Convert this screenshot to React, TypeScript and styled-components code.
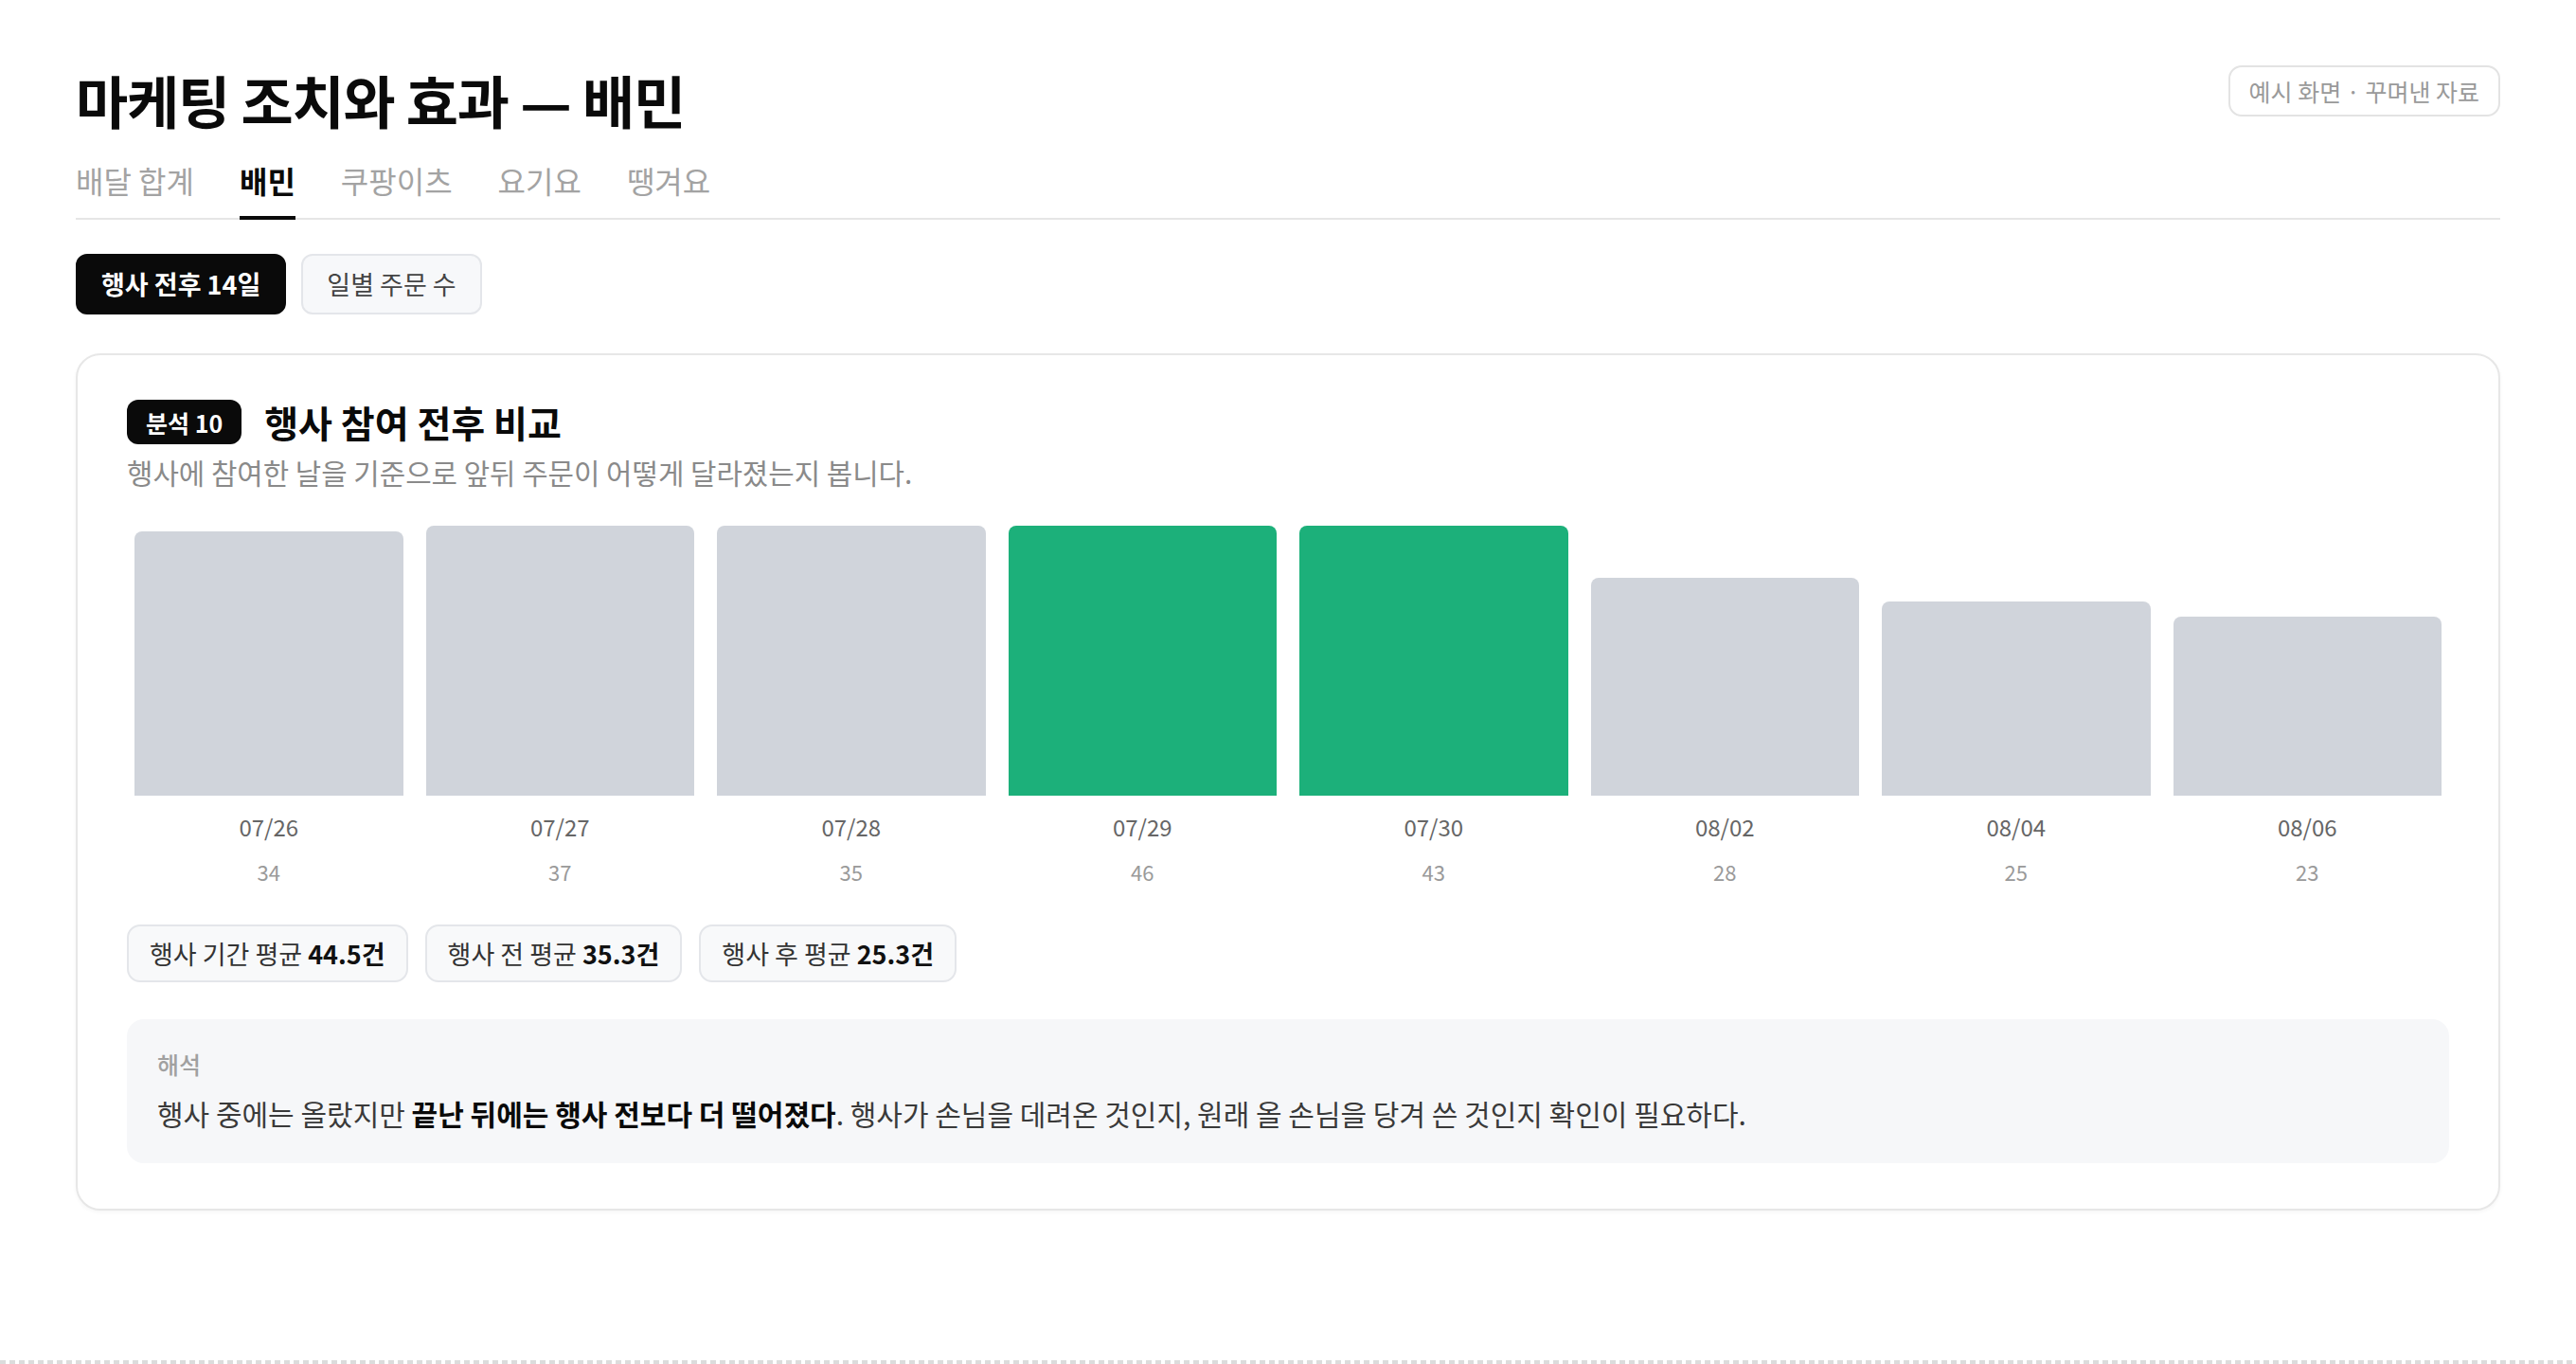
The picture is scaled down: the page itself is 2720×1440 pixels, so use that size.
import React from "react";
import styled, { createGlobalStyle } from "styled-components";

const GlobalStyle = createGlobalStyle`
  html, body {
    margin: 0;
    padding: 0;
    background: #ffffff;
  }
  body {
    font-family: "Noto Sans CJK KR", "Noto Sans", sans-serif;
    color: #111111;
    -webkit-font-smoothing: antialiased;
  }
  * { box-sizing: border-box; }
`;

const Page = styled.div`
  min-height: 100vh;
  display: flex;
  flex-direction: column;
`;

const Main = styled.main`
  padding: 69px 80px 0;
  display: flex;
  flex-direction: column;
`;

const Header = styled.header`
  display: flex;
  justify-content: space-between;
  align-items: flex-start;
`;

const Title = styled.h1`
  margin: 0;
  font-size: 60px;
  line-height: 72px;
  font-weight: 700;
  letter-spacing: -0.02em;
  color: #0a0a0a;
`;

const SampleBadge = styled.div`
  margin-top: 0;
  padding: 7px 20px;
  border: 2px solid #e3e3e3;
  border-radius: 14px;
  font-size: 25px;
  line-height: 36px;
  color: #9a9a9a;
  background: #ffffff;
`;

const TabBar = styled.nav`
  margin-top: 28px;
  display: flex;
  gap: 48px;
  border-bottom: 2px solid #e6e6e6;
`;

const Tab = styled.div<{ $active?: boolean }>`
  padding-bottom: 16px;
  margin-bottom: -2px;
  border-bottom: 4px solid ${(p) => (p.$active ? "#0a0a0a" : "transparent")};
  font-size: 32px;
  line-height: 43px;
  font-weight: ${(p) => (p.$active ? 700 : 400)};
  color: ${(p) => (p.$active ? "#0a0a0a" : "#a3a3a3")};
`;

const Segments = styled.div`
  margin-top: 36px;
  display: flex;
  gap: 16px;
`;

const Segment = styled.div<{ $active?: boolean }>`
  padding: 10px 25px;
  border: 2px solid ${(p) => (p.$active ? "#0a0a0a" : "#e4e6ea")};
  border-radius: 12px;
  background: ${(p) => (p.$active ? "#0a0a0a" : "#f7f8fa")};
  color: ${(p) => (p.$active ? "#ffffff" : "#444444")};
  font-size: 27px;
  line-height: 40px;
  font-weight: ${(p) => (p.$active ? 700 : 400)};
`;

const Card = styled.section`
  margin-top: 41px;
  padding: 47px 52px 48px;
  border: 2px solid #e7e7e7;
  border-radius: 26px;
  background: #ffffff;
  box-shadow: 0 2px 4px rgba(0, 0, 0, 0.04);
`;

const CardHead = styled.div`
  display: flex;
  align-items: center;
  gap: 24px;
`;

const AnalysisBadge = styled.span`
  display: inline-flex;
  align-items: center;
  height: 47px;
  padding: 0 20px;
  border-radius: 12px;
  background: #0a0a0a;
  color: #ffffff;
  font-size: 25px;
  font-weight: 700;
`;

const CardTitle = styled.h2`
  margin: 0;
  font-size: 39px;
  line-height: 47px;
  font-weight: 700;
  color: #0a0a0a;
`;

const CardDesc = styled.p`
  margin: 8px 0 0;
  font-size: 29.8px;
  line-height: 42px;
  color: #8a8a8a;
`;

const Chart = styled.div`
  margin-top: 36px;
  padding: 0 8px;
  display: grid;
  grid-template-columns: repeat(8, 1fr);
  gap: 24px;
`;

const Column = styled.div`
  display: flex;
  flex-direction: column;
  align-items: center;
`;

const BarTrack = styled.div`
  width: 100%;
  height: 285px;
  display: flex;
  align-items: flex-end;
`;

const Bar = styled.div<{ $hi?: boolean }>`
  width: 100%;
  border-radius: 8px 8px 0 0;
  background: ${(p) => (p.$hi ? "#1cb07a" : "#d0d4db")};
`;

const DateLabel = styled.div`
  margin-top: 16px;
  font-size: 24px;
  line-height: 34px;
  color: #666666;
`;

const ValueLabel = styled.div`
  margin-top: 14px;
  font-size: 22px;
  line-height: 32px;
  color: #9a9a9a;
`;

const Pills = styled.div`
  margin-top: 40px;
  display: flex;
  gap: 18px;
`;

const Pill = styled.div`
  padding: 9.5px 22px;
  border: 2px solid #e4e6ea;
  border-radius: 14px;
  background: #f8f9fa;
  font-size: 27px;
  line-height: 38px;
  color: #333333;

  b {
    font-weight: 700;
    color: #111111;
  }
`;

const Note = styled.div`
  margin-top: 39px;
  padding: 31px 32px 32px;
  border-radius: 18px;
  background: #f6f7f9;
`;

const NoteLabel = styled.div`
  font-size: 25px;
  line-height: 33px;
  font-weight: 500;
  color: #a0a0a0;
`;

const NoteText = styled.p`
  margin: 14px 0 0;
  font-size: 30px;
  line-height: 42px;
  color: #3a3a3a;

  b {
    font-weight: 700;
    color: #0a0a0a;
  }
`;

const DashedEdge = styled.div`
  margin-top: auto;
  height: 4px;
  background: repeating-linear-gradient(
    90deg,
    #dcdcdc 0 6px,
    transparent 6px 10px
  );
`;

const tabs = ["배달 합계", "배민", "쿠팡이츠", "요기요", "땡겨요"];

const bars = [
  { d: "07/26", v: 34, hi: false },
  { d: "07/27", v: 37, hi: false },
  { d: "07/28", v: 35, hi: false },
  { d: "07/29", v: 46, hi: true },
  { d: "07/30", v: 43, hi: true },
  { d: "08/02", v: 28, hi: false },
  { d: "08/04", v: 25, hi: false },
  { d: "08/06", v: 23, hi: false },
];

export default function App() {
  return (
    <>
      <GlobalStyle />
      <Page>
        <Main>
          <Header>
            <Title>마케팅 조치와 효과 — 배민</Title>
            <SampleBadge>예시 화면 · 꾸며낸 자료</SampleBadge>
          </Header>

          <TabBar>
            {tabs.map((t) => (
              <Tab key={t} $active={t === "배민"}>
                {t}
              </Tab>
            ))}
          </TabBar>

          <Segments>
            <Segment $active>행사 전후 14일</Segment>
            <Segment>일별 주문 수</Segment>
          </Segments>

          <Card>
            <CardHead>
              <AnalysisBadge>분석 10</AnalysisBadge>
              <CardTitle>행사 참여 전후 비교</CardTitle>
            </CardHead>
            <CardDesc>
              행사에 참여한 날을 기준으로 앞뒤 주문이 어떻게 달라졌는지 봅니다.
            </CardDesc>

            <Chart>
              {bars.map((b) => (
                <Column key={b.d}>
                  <BarTrack>
                    <Bar
                      $hi={b.hi}
                      style={{ height: `${Math.min(b.v * 8.22, 285)}px` }}
                    />
                  </BarTrack>
                  <DateLabel>{b.d}</DateLabel>
                  <ValueLabel>{b.v}</ValueLabel>
                </Column>
              ))}
            </Chart>

            <Pills>
              <Pill>
                행사 기간 평균 <b>44.5건</b>
              </Pill>
              <Pill>
                행사 전 평균 <b>35.3건</b>
              </Pill>
              <Pill>
                행사 후 평균 <b>25.3건</b>
              </Pill>
            </Pills>

            <Note>
              <NoteLabel>해석</NoteLabel>
              <NoteText>
                행사 중에는 올랐지만 <b>끝난 뒤에는 행사 전보다 더 떨어졌다</b>.
                행사가 손님을 데려온 것인지, 원래 올 손님을 당겨 쓴 것인지
                확인이 필요하다.
              </NoteText>
            </Note>
          </Card>
        </Main>
        <DashedEdge />
      </Page>
    </>
  );
}
